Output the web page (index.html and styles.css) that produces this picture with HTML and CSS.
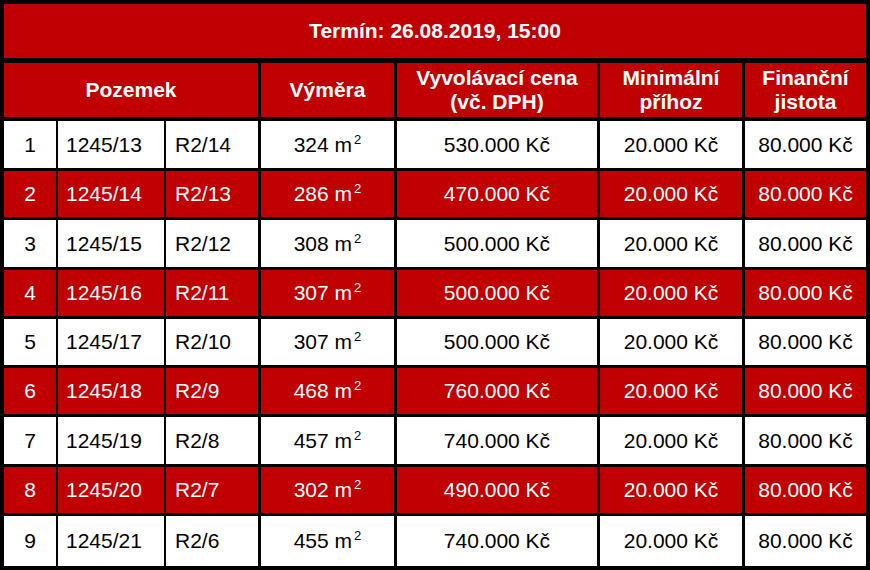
FILE: index.html
```html
<!DOCTYPE html>
<html lang="cs">
<head>
<meta charset="utf-8">
<title>Termín dražby</title>
<link rel="stylesheet" href="styles.css">
</head>
<body>
<div class="sheet">
  <div class="row head">
    <div class="cell title">Termín: 26.08.2019, 15:00</div>
  </div>
  <div class="row head">
    <div class="cell span3">Pozemek</div>
    <div class="cell">Výměra</div>
    <div class="cell">Vyvolávací cena<br>(vč. DPH)</div>
    <div class="cell">Minimální<br>příhoz</div>
    <div class="cell last">Finanční<br>jistota</div>
  </div>

  <div class="row white">
    <div class="cell thin">1</div><div class="cell thin left">1245/13</div><div class="cell left p3">R2/14</div>
    <div class="cell"><span>324 m<sup class="sq">2</sup></span></div><div class="cell">530.000 Kč</div><div class="cell">20.000 Kč</div><div class="cell last">80.000 Kč</div>
  </div>
  <div class="row red">
    <div class="cell thin">2</div><div class="cell thin left">1245/14</div><div class="cell left p3">R2/13</div>
    <div class="cell"><span>286 m<sup class="sq">2</sup></span></div><div class="cell">470.000 Kč</div><div class="cell">20.000 Kč</div><div class="cell last">80.000 Kč</div>
  </div>
  <div class="row white">
    <div class="cell thin">3</div><div class="cell thin left">1245/15</div><div class="cell left p3">R2/12</div>
    <div class="cell"><span>308 m<sup class="sq">2</sup></span></div><div class="cell">500.000 Kč</div><div class="cell">20.000 Kč</div><div class="cell last">80.000 Kč</div>
  </div>
  <div class="row red">
    <div class="cell thin">4</div><div class="cell thin left">1245/16</div><div class="cell left p3">R2/11</div>
    <div class="cell"><span>307 m<sup class="sq">2</sup></span></div><div class="cell">500.000 Kč</div><div class="cell">20.000 Kč</div><div class="cell last">80.000 Kč</div>
  </div>
  <div class="row white">
    <div class="cell thin">5</div><div class="cell thin left">1245/17</div><div class="cell left p3">R2/10</div>
    <div class="cell"><span>307 m<sup class="sq">2</sup></span></div><div class="cell">500.000 Kč</div><div class="cell">20.000 Kč</div><div class="cell last">80.000 Kč</div>
  </div>
  <div class="row red">
    <div class="cell thin">6</div><div class="cell thin left">1245/18</div><div class="cell left p3">R2/9</div>
    <div class="cell"><span>468 m<sup class="sq">2</sup></span></div><div class="cell">760.000 Kč</div><div class="cell">20.000 Kč</div><div class="cell last">80.000 Kč</div>
  </div>
  <div class="row white">
    <div class="cell thin">7</div><div class="cell thin left">1245/19</div><div class="cell left p3">R2/8</div>
    <div class="cell"><span>457 m<sup class="sq">2</sup></span></div><div class="cell">740.000 Kč</div><div class="cell">20.000 Kč</div><div class="cell last">80.000 Kč</div>
  </div>
  <div class="row red">
    <div class="cell thin">8</div><div class="cell thin left">1245/20</div><div class="cell left p3">R2/7</div>
    <div class="cell"><span>302 m<sup class="sq">2</sup></span></div><div class="cell">490.000 Kč</div><div class="cell">20.000 Kč</div><div class="cell last">80.000 Kč</div>
  </div>
  <div class="row white final">
    <div class="cell thin">9</div><div class="cell thin left">1245/21</div><div class="cell left p3">R2/6</div>
    <div class="cell"><span>455 m<sup class="sq">2</sup></span></div><div class="cell">740.000 Kč</div><div class="cell">20.000 Kč</div><div class="cell last">80.000 Kč</div>
  </div>
</div>
</body>
</html>
```
FILE: styles.css
```css
html, body {
  margin: 0;
  padding: 0;
  background: #000;
}

.sheet {
  box-sizing: border-box;
  width: 870px;
  height: 570px;
  border: 4px solid #000;
  background: #000;
  display: grid;
  grid-template-columns: 54px 108px 95px 136px 203px 145px 121px;
  grid-template-rows: 59px 58px 50px 49px 50px 49px 49px 49px 50px 49px 50px;
  font-family: "Liberation Sans", Arial, sans-serif;
  font-size: 21px;
}

.row {
  display: contents;
}

.cell {
  box-sizing: border-box;
  display: flex;
  align-items: center;
  justify-content: center;
  text-align: center;
  border-right: 3px solid #000;
  border-bottom: 3px solid #000;
  line-height: 24px;
  white-space: nowrap;
}

.cell.thin {
  border-right-width: 2px;
}

.cell.last {
  border-right: none;
}

.cell.left {
  justify-content: flex-start;
  padding-left: 8px;
}

.cell.p3 {
  padding-left: 9px;
}

.head .cell {
  background: #c00000;
  color: #fff;
  font-weight: bold;
  border-bottom-width: 4px;
}

.head .cell.title {
  grid-column: 1 / -1;
  border-right: none;
  border-bottom-width: 5px;
}

.cell.span3 {
  grid-column: span 3;
}

.white .cell {
  background: #fff;
  color: #000;
}

.red .cell {
  background: #c00000;
  color: #fff;
}

.final .cell {
  border-bottom: none;
}

.sq {
  font-size: 13px;
  line-height: 0;
  vertical-align: 8px;
  margin-left: 2px;
}
```
